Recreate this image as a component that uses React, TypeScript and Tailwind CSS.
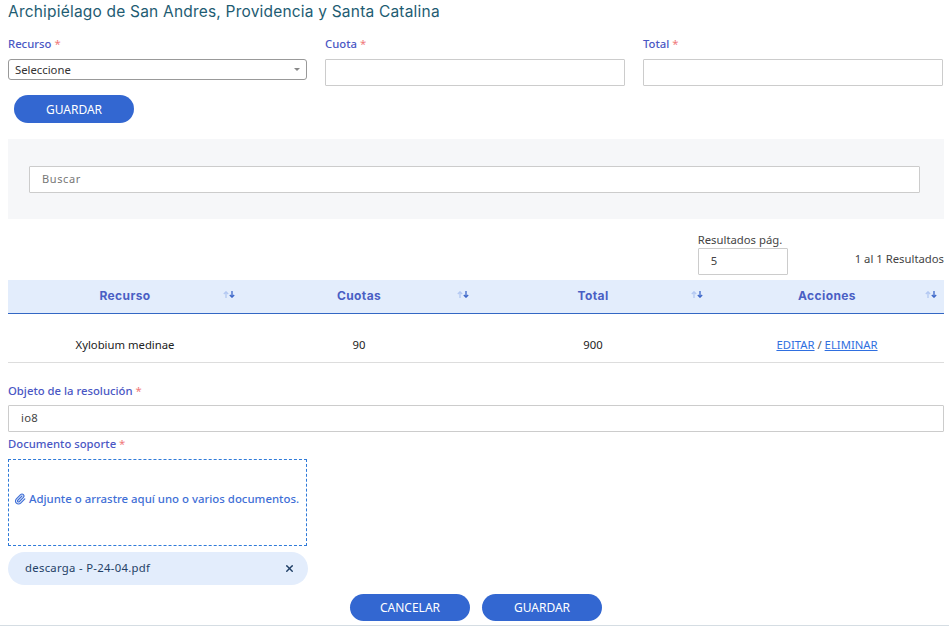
import { Paperclip, X } from "lucide-react";

const body = "font-['Noto_Sans','Open_Sans',sans-serif]";
const head = "font-['Inter','Lato',sans-serif]";

function Label({ text, className = "" }: { text: string; className?: string }) {
  return (
    <div className={`text-[11.3px] leading-[16px] font-medium text-[#4a57c4] ${className}`}>
      {text} <span className="text-[#f07a7a] font-normal">*</span>
    </div>
  );
}

function Sort() {
  return (
    <svg width="12" height="7" viewBox="0 0 12 7" className="absolute right-[7px] top-[11px]" fill="none" strokeWidth="1.3">
      <path d="M3 7V1M.8 3 3 .8 5.2 3" stroke="#b3c8f2" />
      <path d="M9 0v6M6.8 4 9 6.2 11.2 4" stroke="#3d67c9" />
    </svg>
  );
}

function Button({ children, className }: { children: string; className: string }) {
  return (
    <button className={`w-[120px] rounded-full bg-[#3367d1] text-white text-[12px] leading-none ${className}`}>
      {children}
    </button>
  );
}

function Th({ text }: { text: string }) {
  return (
    <div className="relative flex items-center justify-center h-full pb-[2px]">
      <span className={`${head} text-[12px] font-bold tracking-[0.4px] text-[#4a5fc4]`}>{text}</span>
      <Sort />
    </div>
  );
}

export default function App() {
  return (
    <div className={`${body} w-[949px] h-[626px] overflow-hidden bg-white pl-[8px] pr-[5px] relative text-[#333]`}>
      <h1 className={`${head} h-[24px] pt-[3px] text-[15.5px] leading-[18px] font-normal tracking-[0.2px] text-[#1e5c72]`}>
        Archipiélago de San Andres, Providencia y Santa Catalina
      </h1>

      <div className="mt-[12px] grid grid-cols-[299px_300px_300px] gap-x-[18px] h-[50px]">
        <div>
          <Label text="Recurso" />
          <div className="mt-[7px] h-[21px] flex items-center justify-between border border-[#999] rounded-[3px] pl-[6px] pr-[6px] text-[11.3px] text-[#333]">
            <span className="pt-[1px]">Seleccione</span>
            <span className="w-0 h-0 border-x-[3px] border-x-transparent border-t-[3px] border-t-[#888]" />
          </div>
        </div>
        <div>
          <Label text="Cuota" />
          <div className="mt-[7px] h-[27px] border border-[#ccc] rounded-[1px]" />
        </div>
        <div>
          <Label text="Total" />
          <div className="mt-[7px] h-[27px] border border-[#ccc] rounded-[1px]" />
        </div>
      </div>

      <div className="mt-[9px] ml-[6px] flex">
        <Button className="h-[28px] pt-[1px]">GUARDAR</Button>
      </div>

      <div className="mt-[16px] h-[80px] bg-[#f6f7f9] pt-[27px] pl-[21px] pr-[24px]">
        <div className="h-[27px] border border-[#ccc] rounded-[1px] bg-white pl-[12px] flex items-center text-[11px] tracking-[0.6px] text-[#777]">
          Buscar
        </div>
      </div>

      <div className="h-[61px] flex justify-end items-start">
        <div className="mt-[13px] w-[90px]">
          <div className="mb-[1px] text-[11.3px] leading-[15px] text-[#444] whitespace-nowrap">Resultados pág.</div>
          <div className="h-[27px] border border-[#ccc] rounded-[1px] pl-[12px] flex items-center text-[11.3px] text-[#444]">5</div>
        </div>
        <div className="ml-[67px] mt-[32px] text-[11.3px] leading-[16px] text-[#444] whitespace-nowrap">1 al 1 Resultados</div>
      </div>

      <div className="grid grid-cols-4 h-[34px] bg-[#e3edfc] border-b border-b-[#3367c4]">
        <Th text="Recurso" />
        <Th text="Cuotas" />
        <Th text="Total" />
        <Th text="Acciones" />
      </div>
      <div className="grid grid-cols-4 h-[49px] border-b border-b-[#ddd] text-[11.3px] text-[#222] text-center items-center pt-[15px]">
        <div>Xylobium medinae</div>
        <div>90</div>
        <div>900</div>
        <div>
          <span className="text-[#2f6fe0] underline">EDITAR</span>
          <span className="text-[#555]"> / </span>
          <span className="text-[#2f6fe0] underline">ELIMINAR</span>
        </div>
      </div>

      <Label text="Objeto de la resolución" className="mt-[20px]" />
      <div className="mt-[6px] h-[27px] border border-[#ccc] rounded-[1px] pl-[12px] flex items-center text-[11.3px] tracking-[0.3px] text-[#444]">io8</div>
      <Label text="Documento soporte" className="mt-[4px]" />

      <div className="mt-[7px] w-[299px] h-[87px] border border-dashed border-[#2f7ad8] flex items-center justify-center gap-[3px] pb-[8px] pr-[2px] text-[#3f6fd6] text-[11.4px] font-medium whitespace-nowrap">
        <Paperclip size={12} strokeWidth={2.4} />
        <span>Adjunte o arrastre aquí uno o varios documentos.</span>
      </div>

      <div className="mt-[6px] w-[300px] h-[33px] rounded-full bg-[#e3edfc] pl-[17px] pr-[13px] flex items-center justify-between text-[11.3px] tracking-[0.3px] text-[#1f3f66]">
        <span>descarga - P-24-04.pdf</span>
        <X size={11} strokeWidth={3} className="text-[#1f3f66]" />
      </div>

      <div className="mt-[9px] flex justify-center gap-[12px]">
        <Button className="h-[27px]">CANCELAR</Button>
        <Button className="h-[27px]">GUARDAR</Button>
      </div>

      <div className="absolute left-0 right-0 bottom-0 h-px bg-[#d5dde3]" />
    </div>
  );
}
